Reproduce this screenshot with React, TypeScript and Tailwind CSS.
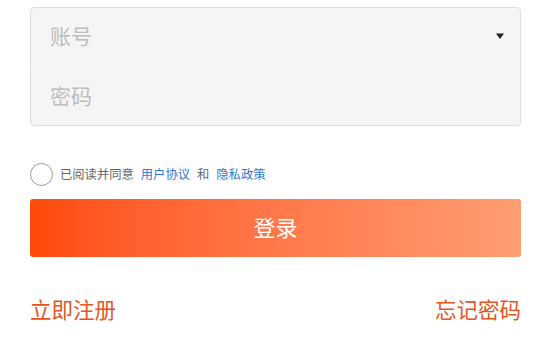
import React from "react";

export default function App() {
  const font = { fontFamily: '"Noto Sans CJK SC", "Noto Sans", sans-serif' };
  return (
    <div className="w-[554px] h-[353px] bg-white" style={font}>
      <div className="px-[30px] pt-[7px] w-[554px]">
        <div className="w-[491px] rounded-[4px] border border-[#dedede] bg-[#f5f5f5] flex flex-col">
          <div className="h-[58px] flex items-center justify-between pl-[19px] pr-[15px] pb-[4px]">
            <span className="text-[21px] text-[#bdbdbd] leading-none">账号</span>
            <svg width="10" height="8" viewBox="0 0 10 8" className="mt-[1px]">
              <path d="M1 1.5 L9 1.5 L5 7 Z" fill="#222" />
            </svg>
          </div>
          <div className="h-px bg-[#fafafa]" />
          <div className="h-[58px] flex items-center pl-[19px] pb-[2px]">
            <span className="text-[21px] text-[#bdbdbd] leading-none">密码</span>
          </div>
        </div>

        <div className="mt-[36px] flex items-center h-[24px]">
          <div className="w-[23px] h-[23px] rounded-full border-[1.5px] border-[#999] bg-white" />
          <span className="ml-[7px] text-[12.3px] text-[#666]">已阅读并同意</span>
          <span className="ml-[7px] text-[12.3px] text-[#2d7bd6]">用户协议</span>
          <span className="ml-[7px] text-[12.3px] text-[#666]">和</span>
          <span className="ml-[7px] text-[12.3px] text-[#2d7bd6]">隐私政策</span>
        </div>

        <button className="mt-[13px] w-[491px] h-[58px] rounded-[3px] bg-gradient-to-r from-[#ff4a06] to-[#ff9d72] text-white text-[22px] flex items-center justify-center pb-[4px]">
          登录
        </button>

        <div className="mt-[41px] w-[491px] flex justify-between items-center text-[21.5px] text-[#e6541f] leading-none">
          <span>立即注册</span>
          <span>忘记密码</span>
        </div>
      </div>
    </div>
  );
}
